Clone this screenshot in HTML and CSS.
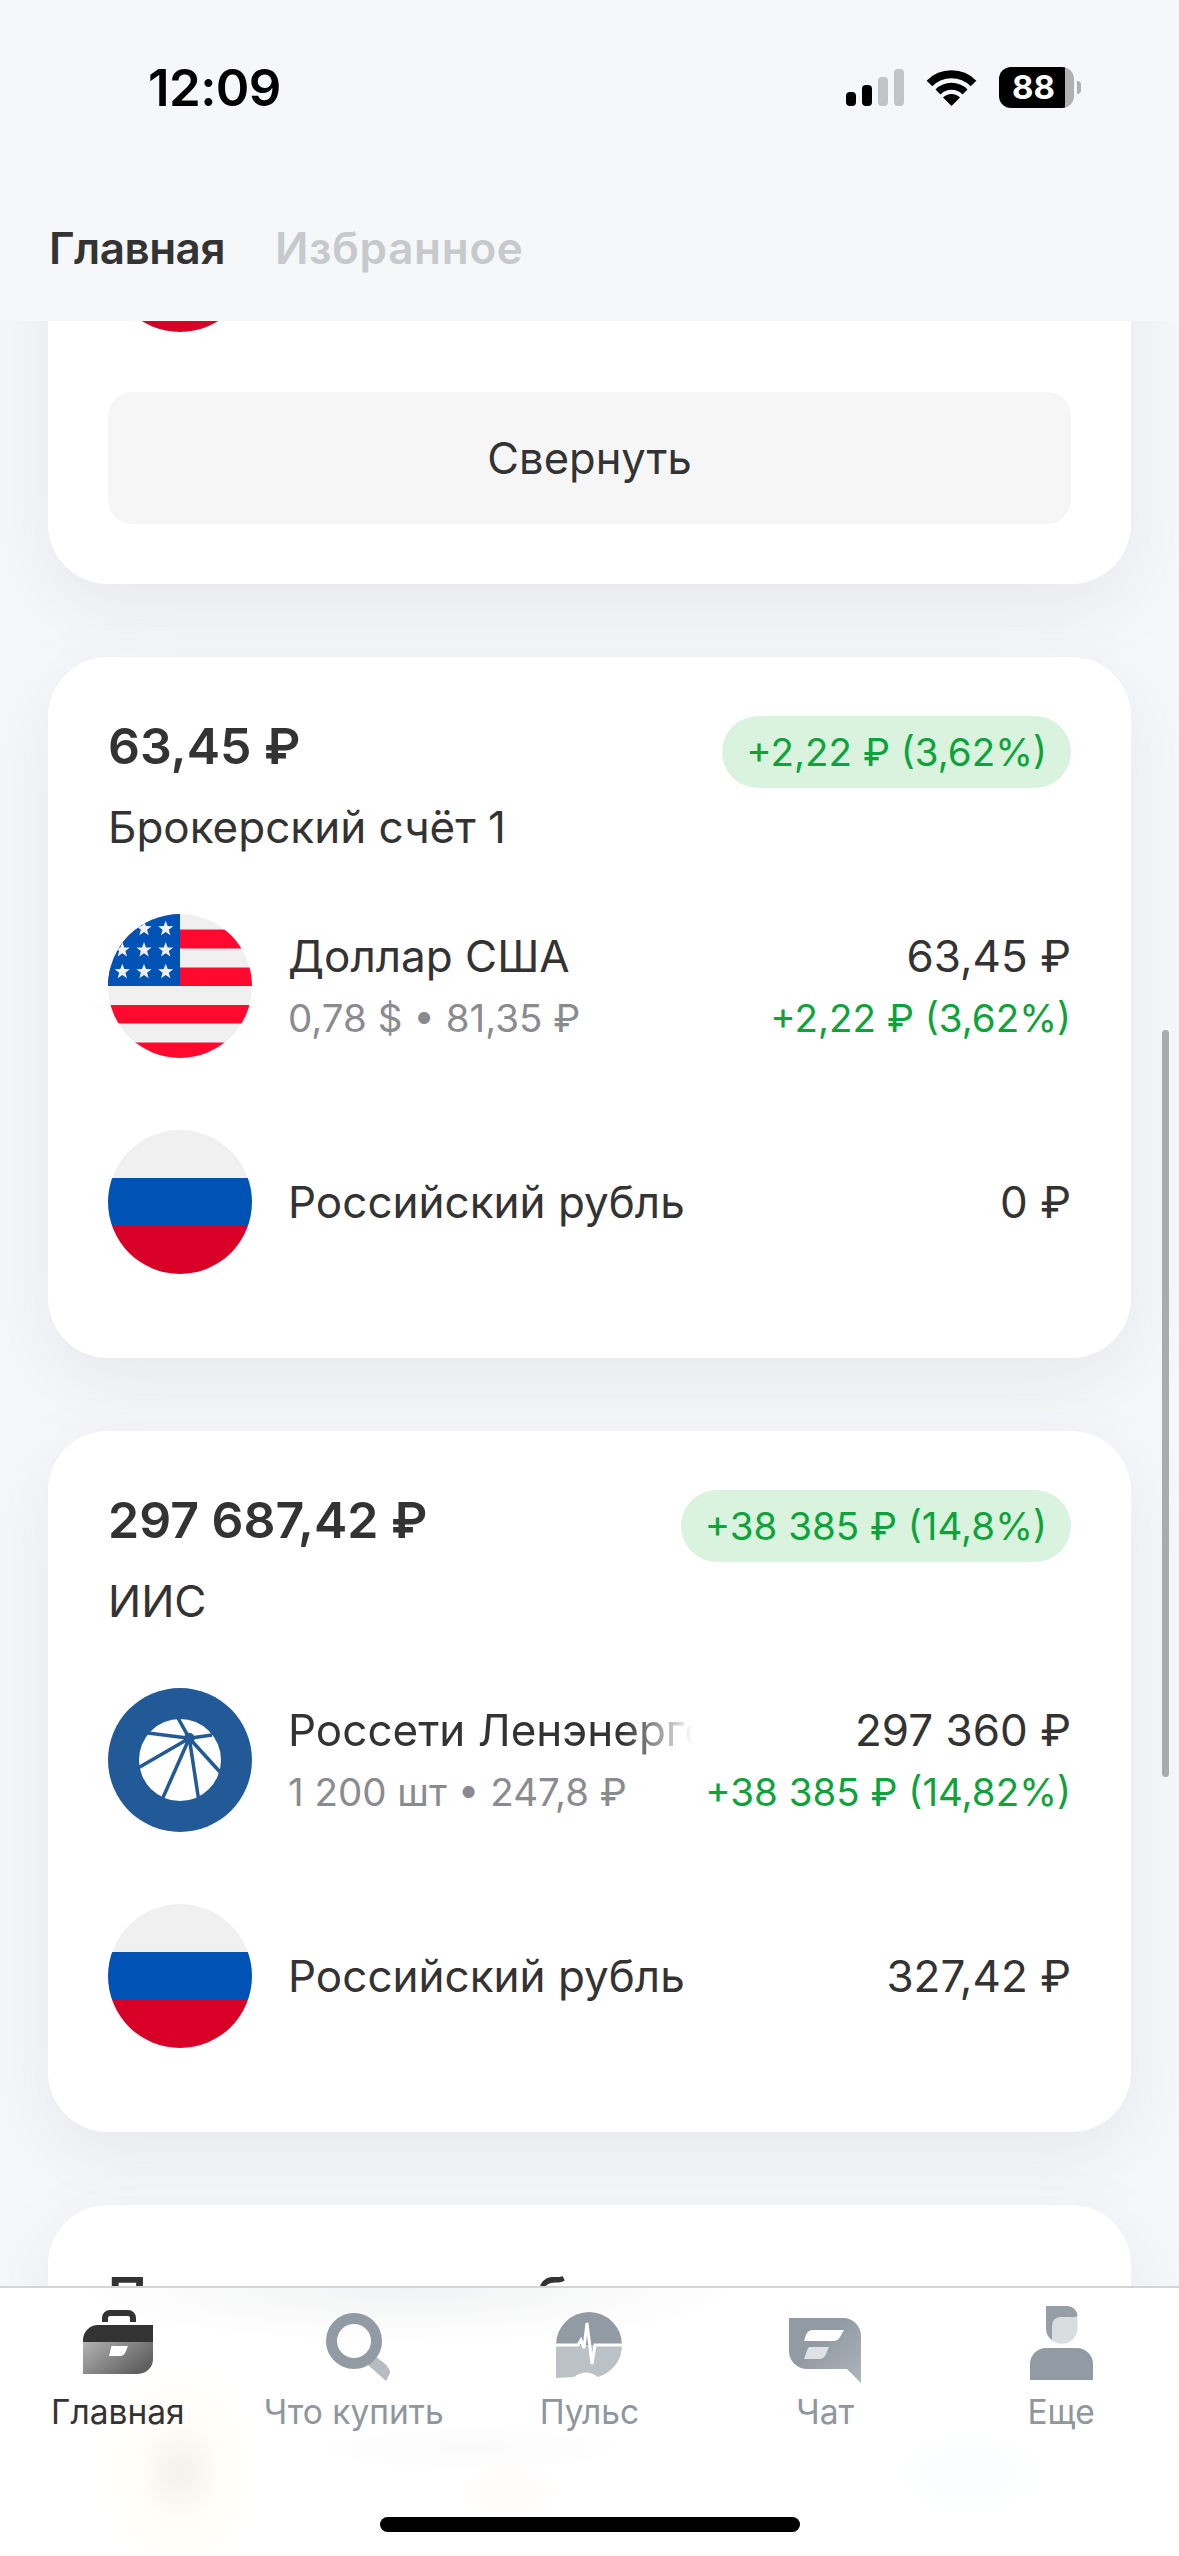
FILE: index.html
```html
<!DOCTYPE html>
<html lang="ru">
<head>
<meta charset="utf-8">
<title>Главная</title>
<link rel="stylesheet" href="styles.css">
</head>
<body>
<svg class="defs" width="0" height="0" aria-hidden="true">
  <defs>
    <clipPath id="disc"><circle cx="72" cy="72" r="72"/></clipPath>
    <polygon id="star" points="0,-8 2,-2.6 7.6,-2.5 3.1,1 4.7,6.5 0,3.2 -4.7,6.5 -3.1,1 -7.6,-2.5 -2,-2.6"/>
    <symbol id="flag-ru" viewBox="0 0 144 144">
      <g clip-path="url(#disc)">
        <rect width="144" height="48" fill="#f0f0f0"/>
        <rect y="48" width="144" height="48" fill="#0052b4"/>
        <rect y="96" width="144" height="48" fill="#d80027"/>
      </g>
    </symbol>
    <linearGradient id="g-case" x1="0" y1="0" x2="1" y2="0.6"><stop offset="0" stop-color="#b2b2b2"/><stop offset="1" stop-color="#5f5f5f"/></linearGradient>
    <linearGradient id="g-gray" x1="0" y1="0" x2="1" y2="1"><stop offset="0.4" stop-color="#929aa3"/><stop offset="1" stop-color="#b0b5bb"/></linearGradient>
  </defs>
</svg>

<div class="phone">
  <header class="top">
    <div class="status">
      <span class="time">12:09</span>
      <div class="status-icons">
        <svg class="signal" width="58" height="37" viewBox="0 0 58 37">
          <rect x="0" y="23" width="10" height="14" rx="4" fill="#000"/>
          <rect x="16" y="16" width="10" height="21" rx="4" fill="#000"/>
          <rect x="32" y="8" width="10" height="29" rx="4" fill="#c2c3c5"/>
          <rect x="48" y="0" width="10" height="37" rx="4" fill="#c2c3c5"/>
        </svg>
        <svg class="wifi" width="51" height="37" viewBox="0 0 51 37">
          <path d="M3.5 14.5A31 31 0 0 1 47.5 14.5" fill="none" stroke="#000" stroke-width="8"/>
          <path d="M12 23A19 19 0 0 1 39 23" fill="none" stroke="#000" stroke-width="7"/>
          <path d="M25.5 37L17 28.500A12 12 0 0 1 34 28.500Z" fill="#000"/>
        </svg>
        <div class="battery"><span>88</span></div>
      </div>
    </div>
    <nav class="tabs">
      <span class="tab tab-on">Главная</span>
      <span class="tab tab-off">Избранное</span>
    </nav>
  </header>

  <main class="scroll">
    <section class="card card-first">
      <svg class="flag" viewBox="0 0 144 144"><use href="#flag-ru"/></svg>
      <button class="collapse" type="button">Свернуть</button>
    </section>

    <section class="card">
      <div class="card-head">
        <h2 class="total">63,45 ₽</h2>
        <span class="pill">+2,22 ₽ (3,62%)</span>
      </div>
      <p class="acct">Брокерский счёт 1</p>
      <div class="rows">
        <div class="row">
          <svg class="flag" viewBox="0 0 144 144">
            <g clip-path="url(#disc)">
              <rect width="144" height="144" fill="#f0f0f0"/>
              <rect y="15.500" width="144" height="19" fill="#ff0a2e"/>
              <rect y="53.500" width="144" height="18.500" fill="#ff0a2e"/>
              <rect y="91" width="144" height="18.500" fill="#ff0a2e"/>
              <rect y="128.500" width="144" height="16" fill="#ff0a2e"/>
              <rect width="72" height="72" fill="#0052b4"/>
              <g fill="#f0f0f0">
                <use href="#star" x="36" y="14.700"/><use href="#star" x="57.700" y="14.700"/>
                <use href="#star" x="14.300" y="36"/><use href="#star" x="36" y="36"/><use href="#star" x="57.700" y="36"/>
                <use href="#star" x="14.300" y="57.700"/><use href="#star" x="36" y="57.700"/><use href="#star" x="57.700" y="57.700"/>
              </g>
            </g>
          </svg>
          <div class="col-left">
            <div class="name">Доллар США</div>
            <div class="sub">0,78 $ • 81,35 ₽</div>
          </div>
          <div class="col-right">
            <div class="name">63,45 ₽</div>
            <div class="gain">+2,22 ₽ (3,62%)</div>
          </div>
        </div>
        <div class="row">
          <svg class="flag" viewBox="0 0 144 144"><use href="#flag-ru"/></svg>
          <div class="col-left col-single"><div class="name">Российский рубль</div></div>
          <div class="col-right col-single"><div class="name">0 ₽</div></div>
        </div>
      </div>
    </section>

    <section class="card">
      <div class="card-head">
        <h2 class="total">297 687,42 ₽</h2>
        <span class="pill">+38 385 ₽ (14,8%)</span>
      </div>
      <p class="acct">ИИС</p>
      <div class="rows">
        <div class="row">
          <svg class="flag" viewBox="0 0 144 144">
            <circle cx="72" cy="72" r="72" fill="#215a96"/>
            <circle cx="72" cy="72" r="41" fill="#fff"/>
            <g stroke="#215a96" stroke-width="3.500" fill="none">
              <path d="M81.300 50.300L70 30"/>
              <path d="M81.300 50.300L40 45"/>
              <path d="M81.300 50.300L30 80"/>
              <path d="M81.300 50.300L53 114"/>
              <path d="M81.300 50.300L91 114"/>
              <path d="M81.300 50.300L112 84"/>
              <path d="M81.300 50.300L104 47"/>
            </g>
            <circle cx="81.300" cy="50.300" r="5.500" fill="#215a96"/>
          </svg>
          <div class="col-left">
            <div class="name name-fade">Россети Ленэнерго</div>
            <div class="sub">1 200 шт • 247,8 ₽</div>
          </div>
          <div class="col-right">
            <div class="name">297 360 ₽</div>
            <div class="gain">+38 385 ₽ (14,82%)</div>
          </div>
        </div>
        <div class="row">
          <svg class="flag" viewBox="0 0 144 144"><use href="#flag-ru"/></svg>
          <div class="col-left col-single"><div class="name">Российский рубль</div></div>
          <div class="col-right col-single"><div class="name">327,42 ₽</div></div>
        </div>
      </div>
    </section>

    <section class="card card-last">
      <h2 class="card-title">Перспективные бумаги</h2>
    </section>
  </main>

  <div class="scrollbar"></div>

  <footer class="bottom">
    <div class="bar">
      <a class="item item-on">
        <span class="ico">
          <svg class="i-case" width="70" height="64" viewBox="0 0 70 64">
            <path d="M22 12V8a5 5 0 0 1 5-5h18a5 5 0 0 1 5 5v4" fill="none" stroke="#333" stroke-width="6"/>
            <path d="M15 15H70V32H0V30A15 15 0 0 1 15 15Z" fill="#333"/>
            <path d="M0 32H70V49A15 15 0 0 1 55 64H0Z" fill="url(#g-case)"/>
            <path d="M29 36H45L42.500 42Q41 46 37 46H26L27.500 40Q28 36 29 36Z" fill="#fff"/>
          </svg>
        </span>
        <span class="label">Главная</span>
      </a>
      <a class="item">
        <span class="ico">
          <svg class="i-search" width="64" height="68" viewBox="0 0 64 68">
            <path d="M47.600 42L58 50Q64 55 64 60L60 68L42 52Z" fill="#b7bcc2"/>
            <circle cx="28" cy="28" r="22.500" fill="none" stroke="#929aa3" stroke-width="11"/>
          </svg>
        </span>
        <span class="label">Что купить</span>
      </a>
      <a class="item">
        <span class="ico">
          <svg class="i-pulse" width="66" height="66" viewBox="0 0 66 66">
            <path d="M0 33A33 33 0 0 1 66 33Z" fill="#929aa3"/>
            <path d="M0 33H66A33 33 0 0 1 42 65Q30 56 18 65L0 66Z" fill="#bcc1c6"/>
            <path d="M0 33H22L25 28L28 36L31 11L36 52L39 33H66" fill="none" stroke="#fff" stroke-width="3"/>
          </svg>
        </span>
        <span class="label">Пульс</span>
      </a>
      <a class="item">
        <span class="ico">
          <svg class="i-chat" width="72" height="65" viewBox="0 0 72 65">
            <path d="M0 0H54A18 18 0 0 1 72 18V65L58 51H18A18 18 0 0 1 0 33Z" fill="url(#g-gray)"/>
            <path d="M24 12H55L51 19Q49 23 44 23H15L17 17Q19 12 24 12Z" fill="#fff"/>
            <path d="M21 29H40L37 36Q35 41 30 41H15L17.500 34Q19 29 21 29Z" fill="#dfe2e4"/>
          </svg>
        </span>
        <span class="label">Чат</span>
      </a>
      <a class="item">
        <span class="ico">
          <svg class="i-person" width="63" height="74" viewBox="0 0 63 74">
            <path d="M16 0H37A10.500 10.500 0 0 1 47.500 10.500V22A15.750 15.750 0 0 1 16 22Z" fill="#dadde0"/>
            <path d="M16 0H37A10.500 10.500 0 0 1 47.500 9Q47 12 40 11H30Q22 12 22 20V34Q16 30 16 22Z" fill="#969ea6"/>
            <path d="M0 74V58A16 16 0 0 1 16 42H47A16 16 0 0 1 63 58V74Z" fill="#929aa3"/>
          </svg>
        </span>
        <span class="label">Еще</span>
      </a>
    </div>
    <div class="home"></div>
  </footer>
</div>
</body>
</html>
```

FILE: styles.css
```css
* { box-sizing: border-box; }

html, body {
  margin: 0;
  padding: 0;
}

body {
  font-family: "Inter", "Liberation Sans", sans-serif;
  color: #333;
  background: #f6f7f9;
}

.defs { position: absolute; }

.phone {
  position: relative;
  width: 1179px;
  height: 2556px;
  overflow: hidden;
  display: flex;
  flex-direction: column;
  background: #f6f7f9;
}

/* Top */
.top {
  flex: none;
  height: 321px;
  background: #f6f7f9;
  position: relative;
  z-index: 2;
}

.status {
  height: 174px;
  display: flex;
  align-items: center;
  justify-content: space-between;
  padding: 0 105px 0 148px;
}

.time {
  font-size: 51px;
  font-weight: 600;
  color: #000;
  letter-spacing: -0.6px;
}

.status-icons {
  display: flex;
  align-items: center;
  gap: 22px;
}

.battery {
  position: relative;
  width: 75px;
  height: 41px;
  border-radius: 12px;
  background: linear-gradient(to right, #000 88%, #b0b0b0 88%);
  color: #fff;
  font-size: 33px;
  font-weight: 700;
  line-height: 41px;
  padding-left: 13px;
}

.battery::after {
  content: "";
  position: absolute;
  right: -7px;
  top: 14px;
  width: 4px;
  height: 13px;
  border-radius: 0 5px 5px 0;
  background: #b0b0b0;
}

.tabs {
  display: flex;
  gap: 50px;
  padding: 46px 0 0 49px;
}

.tab {
  font-size: 44px;
  line-height: 56px;
  font-weight: 600;
  color: #c7cacd;
}

.tab-on {
  color: #333;
  letter-spacing: -0.5px;
}

.tab-off { letter-spacing: 0.7px; }

/* Scroll */
.scroll {
  flex: 1;
  min-height: 0;
  overflow: hidden;
  display: flex;
  flex-direction: column;
  gap: 73px;
  padding: 0 48px;
}

.card {
  flex: none;
  background: #fff;
  border-radius: 60px;
  padding: 59px 60px 84px;
  box-shadow: 0 24px 70px rgba(120, 130, 145, 0.12);
}

.card-first {
  margin-top: -133px;
  padding: 0 60px 60px;
  border-radius: 0 0 60px 60px;
}

.card-last { min-height: 420px; }

.flag {
  flex: none;
  display: block;
  width: 144px;
  height: 144px;
}

.collapse {
  display: block;
  width: 100%;
  height: 132px;
  margin-top: 60px;
  border: 0;
  border-radius: 24px;
  background: #f6f6f7;
  font-family: inherit;
  font-size: 43.5px;
  color: #333;
}

.card-head {
  display: flex;
  justify-content: space-between;
  align-items: flex-start;
}

.total {
  margin: 0;
  font-size: 50px;
  line-height: 60px;
  font-weight: 600;
  color: #333;
}

.pill {
  height: 72px;
  padding: 0 24px;
  border-radius: 36px;
  background: #d9f3df;
  color: #0ba33a;
  font-size: 38.5px;
  line-height: 72px;
  white-space: nowrap;
}

.acct {
  margin: 13px 0 0;
  font-size: 44px;
  line-height: 52px;
  color: #333;
}

.rows {
  display: flex;
  flex-direction: column;
  gap: 72px;
  margin-top: 61px;
}

.row {
  display: flex;
  align-items: center;
  height: 144px;
}

.col-left {
  flex: 1;
  min-width: 0;
  margin-left: 36px;
  padding-top: 2px;
}

.col-right {
  flex: none;
  margin-left: 12px;
  padding-top: 2px;
  text-align: right;
}

.col-single { padding-top: 0; }

.name {
  font-size: 44px;
  line-height: 62px;
  color: #333;
  white-space: nowrap;
}

.name-fade {
  overflow: hidden;
  -webkit-mask-image: linear-gradient(to right, #000 calc(100% - 70px), transparent);
  mask-image: linear-gradient(to right, #000 calc(100% - 70px), transparent);
}

.sub {
  font-size: 38.5px;
  line-height: 62px;
  color: #8a8b8f;
  white-space: nowrap;
}

.gain {
  font-size: 38.5px;
  line-height: 62px;
  color: #0ba33a;
  white-space: nowrap;
}

/* The heading slides under the nav bar: only the tops of its tall letters show. */
.card-title {
  margin: 0;
  height: 23px;
  overflow: hidden;
  font-size: 52px;
  line-height: 66px;
  font-weight: 600;
  color: #333;
}

.scrollbar {
  position: absolute;
  left: 1162px;
  top: 1030px;
  width: 7px;
  height: 747px;
  border-radius: 4px;
  background: rgba(0, 0, 0, 0.3);
}

/* Bottom nav: the blurred content behind it is painted as soft glows */
.bottom {
  position: absolute;
  left: 0;
  right: 0;
  bottom: 0;
  height: 270px;
  z-index: 3;
  border-top: 2px solid #d3d4d6;
  background:
    radial-gradient(ellipse 340px 55px at 408px 0, #f1f2f3, rgba(255, 255, 255, 0) 100%),
    radial-gradient(ellipse 40px 50px at 180px 184px, #f1f1ee, rgba(241, 241, 238, 0) 100%),
    radial-gradient(ellipse 85px 115px at 180px 184px, #fffcee, rgba(255, 252, 238, 0) 100%),
    radial-gradient(ellipse 170px 24px at 470px 160px, #fafafa, rgba(250, 250, 250, 0) 100%),
    radial-gradient(ellipse 60px 40px at 510px 205px, #fffcfa, rgba(255, 252, 250, 0) 100%),
    radial-gradient(ellipse 90px 50px at 970px 185px, #fafcfd, rgba(250, 252, 253, 0) 100%),
    #fff;
}

.bar {
  display: grid;
  grid-template-columns: repeat(5, 1fr);
  padding-top: 18px;
}

.item {
  display: flex;
  flex-direction: column;
  align-items: center;
}

.ico {
  display: block;
  height: 78px;
}

.ico svg { display: block; }

.i-case { margin-top: 4px; }
.i-search { margin-top: 7px; margin-left: 8px; }
.i-pulse { margin-top: 6px; }
.i-chat { margin-top: 12px; }
.i-person { margin-top: 0; }

.label {
  margin-top: 8px;
  font-size: 33.5px;
  line-height: 40px;
  color: #8f969e;
  white-space: nowrap;
}

.item-on .label { color: #333; }

.home {
  position: absolute;
  left: 380px;
  top: 229px;
  width: 420px;
  height: 15px;
  border-radius: 8px;
  background: #000;
}
```
